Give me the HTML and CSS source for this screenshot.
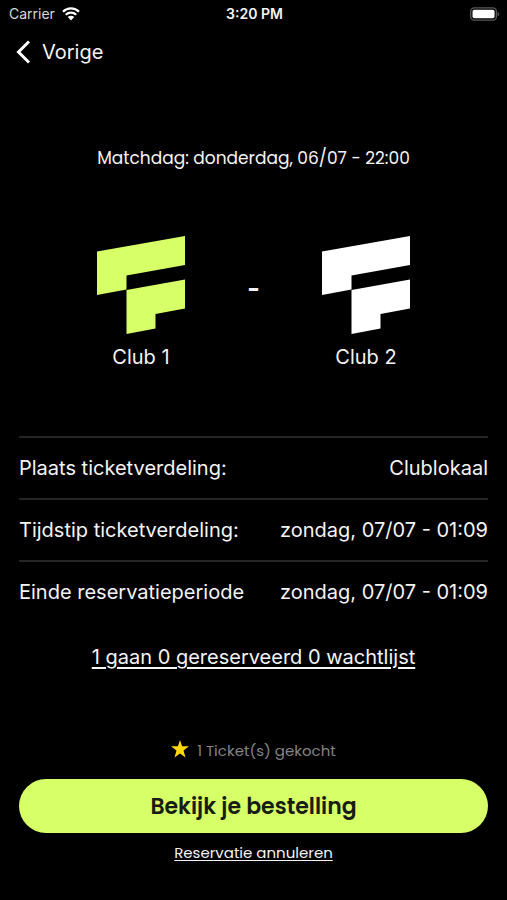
FILE: index.html
```html
<!DOCTYPE html>
<html lang="nl">
<head>
<meta charset="utf-8">
<meta name="viewport" content="width=device-width, initial-scale=1">
<title>Matchdag</title>
<link rel="stylesheet" href="styles.css">
</head>
<body>
<div class="screen">
  <div class="status">
    <div class="carrier">
      <span>Carrier</span>
      <svg class="wifi" viewBox="0 0 18 14" aria-hidden="true">
        <path d="M1 4.7a11.4 11.4 0 0 1 16 0M3.8 7.7a7.4 7.4 0 0 1 10.4 0" fill="none" stroke="currentColor" stroke-width="2.3"/>
        <path d="M5.8 10.1a4.6 4.6 0 0 1 6.4 0L9 13.5z" fill="currentColor"/>
      </svg>
    </div>
    <span class="time">3:20 PM</span>
    <svg class="battery" viewBox="0 0 31 14" aria-hidden="true">
      <rect x="0.7" y="0.7" width="26.6" height="12.6" rx="3.8" fill="none" stroke="#59595b" stroke-width="1.4"/>
      <rect x="2.6" y="2.6" width="22.8" height="8.8" rx="1.8" fill="#fff"/>
      <path d="M28.6 4.6a2.6 2.6 0 0 1 0 4.8z" fill="#59595b"/>
    </svg>
  </div>
  <nav class="nav">
    <a class="back" href="#">
      <svg class="chevron" viewBox="0 0 14 24" aria-hidden="true"><path d="M12.5 1.5 2 12l10.500 10.500" fill="none" stroke="currentColor" stroke-width="3"/></svg>
      <span>Vorige</span>
    </a>
  </nav>
  <main class="main">
    <p class="date">Matchdag: donderdag, 06/07 - 22:00</p>
    <section class="match">
      <div class="club">
        <svg class="logo lime" viewBox="0 0 88 98" aria-hidden="true"><path d="M0 15.500 88 0v29L29.500 39.500v14L0 59zM29.500 54 88 43.500v29L58.500 78v14.500L29.500 98z" fill="currentColor"/></svg>
        <span>Club 1</span>
      </div>
      <span class="versus">-</span>
      <div class="club">
        <svg class="logo" viewBox="0 0 88 98" aria-hidden="true"><path d="M0 15.500 88 0v29L29.500 39.500v14L0 59zM29.500 54 88 43.500v29L58.500 78v14.500L29.500 98z" fill="currentColor"/></svg>
        <span>Club 2</span>
      </div>
    </section>
    <dl class="details">
      <div class="row"><dt>Plaats ticketverdeling:</dt><dd>Clublokaal</dd></div>
      <div class="row"><dt>Tijdstip ticketverdeling:</dt><dd>zondag, 07/07 - 01:09</dd></div>
      <div class="row"><dt>Einde reservatieperiode</dt><dd>zondag, 07/07 - 01:09</dd></div>
    </dl>
    <a class="attendance" href="#">1 gaan 0 gereserveerd 0 wachtlijst</a>
  </main>
  <footer class="actions">
    <p class="bought">
      <svg class="star" viewBox="0 0 18 18" aria-hidden="true"><path d="M9 0l2.100 6.200H18l-5.500 4.200L14.500 17.500 9 13.500 3.500 17.500l2-7.100L0 6.200h6.900z" fill="#ffd60a"/></svg>
      <span>1 Ticket(s) gekocht</span>
    </p>
    <button class="order" type="button">Bekijk je bestelling</button>
    <a class="cancel" href="#">Reservatie annuleren</a>
  </footer>
</div>
</body>
</html>
```
FILE: styles.css
```css
* { box-sizing: border-box; }

body {
  margin: 0;
  background: #000;
  color: #f4f4f4;
  font-family: Inter, "Liberation Sans", sans-serif;
  font-size: 20px;
  line-height: 24px;
}

p, dl, dd { margin: 0; }
a { color: inherit; }
svg { display: block; flex: none; }

.screen {
  display: flex;
  flex-direction: column;
  min-height: 100vh;
}

.status {
  display: grid;
  grid-template-columns: 1fr auto 1fr;
  align-items: center;
  height: 28px;
  padding: 0 7px 0 9px;
  font-size: 14px;
}

.carrier {
  display: flex;
  align-items: center;
  gap: 7px;
  color: #d8d8d8;
}

.wifi { width: 18px; height: 14px; color: #fff; }
.time { font-weight: 600; }
.battery { width: 30px; height: 14px; justify-self: end; }

.nav { padding: 12px 16px; }

.back {
  display: inline-flex;
  align-items: center;
  gap: 11px;
  text-decoration: none;
}

.chevron { width: 15px; height: 24px; color: #fff; }

.main {
  display: flex;
  flex-direction: column;
  padding: 65px 19px 0;
}

.date {
  font-family: Poppins, "Open Sans", sans-serif;
  font-size: 17px;
  text-align: center;
}

.match {
  display: grid;
  grid-template-columns: 1fr auto 1fr;
  align-items: center;
  padding: 66px 16px 67px;
}

.club {
  display: flex;
  flex-direction: column;
  align-items: center;
  gap: 11px;
}

.logo { width: 88px; height: 98px; color: #fff; }
.lime { color: #d6ff68; }

.versus {
  padding-bottom: 30px;
  font-size: 28px;
  font-weight: 600;
}

.row {
  display: flex;
  align-items: center;
  justify-content: space-between;
  height: 62px;
  border-top: 2px solid #262626;
}

.attendance {
  align-self: center;
  margin-top: 23px;
  text-underline-offset: 3px;
}

.actions {
  display: flex;
  flex-direction: column;
  align-items: center;
  margin-top: auto;
  padding: 0 19px 35px;
  font-family: Poppins, "Open Sans", sans-serif;
  font-size: 15px;
}

.bought {
  display: flex;
  align-items: center;
  gap: 8px;
  color: #858585;
}

.star { width: 18px; height: 24px; padding-bottom: 4px; }

.order {
  width: 100%;
  height: 54px;
  margin: 16px 0 8px;
  padding: 0;
  border: 0;
  border-radius: 27px;
  background: #d6ff68;
  color: #171d10;
  font-family: inherit;
  font-size: 22px;
  font-weight: 600;
}

.cancel { text-underline-offset: 2px; }
```
